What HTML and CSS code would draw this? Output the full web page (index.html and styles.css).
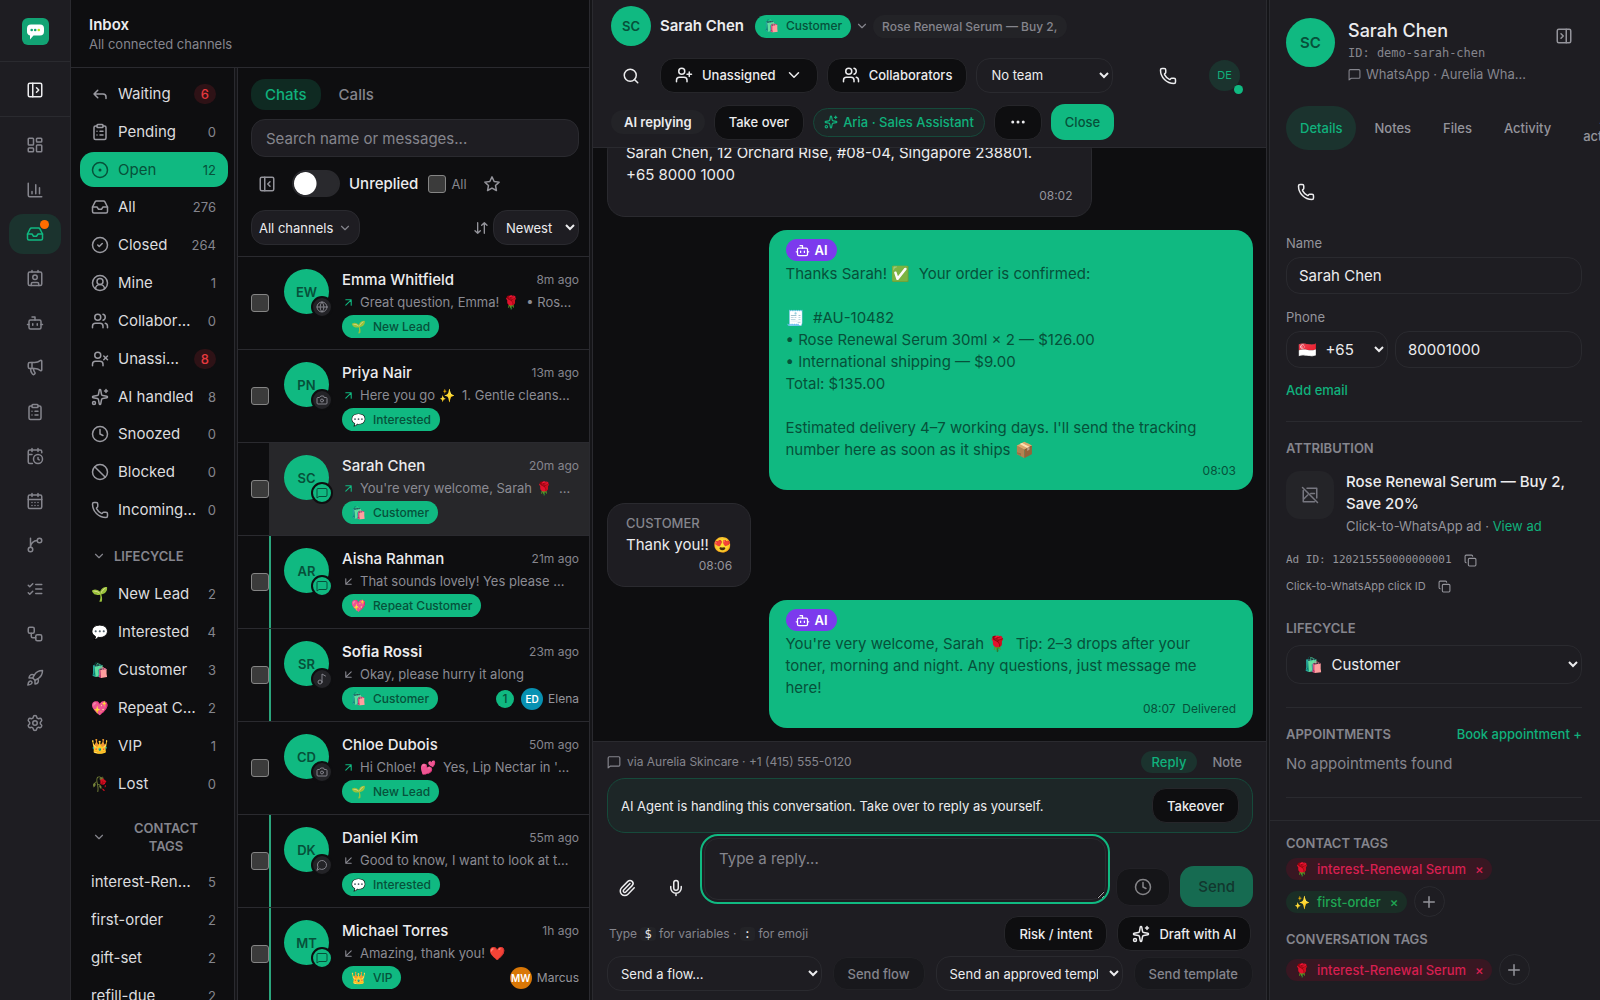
FILE: index.html
```html
<!DOCTYPE html>
<html lang="en">
<head>
<meta charset="utf-8">
<title>Inbox</title>
<link rel="stylesheet" href="styles.css">
</head>
<body>

<!-- icon sprite -->
<svg class="sprite" aria-hidden="true">
  <symbol id="panel-open" viewBox="0 0 24 24"><rect width="18" height="18" x="3" y="3" rx="2"/><path d="M9 3v18M14 9l3 3-3 3"/></symbol>
  <symbol id="panel-close" viewBox="0 0 24 24"><rect width="18" height="18" x="3" y="3" rx="2"/><path d="M9 3v18M16 15l-3-3 3-3"/></symbol>
  <symbol id="panel-right" viewBox="0 0 24 24"><rect width="18" height="18" x="3" y="3" rx="2"/><path d="M15 3v18M8 9l3 3-3 3"/></symbol>
  <symbol id="dashboard" viewBox="0 0 24 24"><rect width="7" height="9" x="3" y="3" rx="1"/><rect width="7" height="5" x="14" y="3" rx="1"/><rect width="7" height="9" x="14" y="12" rx="1"/><rect width="7" height="5" x="3" y="16" rx="1"/></symbol>
  <symbol id="chart" viewBox="0 0 24 24"><path d="M3 3v16a2 2 0 0 0 2 2h16M18 17V9M13 17V5M8 17v-3"/></symbol>
  <symbol id="inbox" viewBox="0 0 24 24"><path d="M22 12h-6l-2 3h-4l-2-3H2"/><path d="M5.45 5.11 2 12v6a2 2 0 0 0 2 2h16a2 2 0 0 0 2-2v-6l-3.45-6.89A2 2 0 0 0 16.76 4H7.24a2 2 0 0 0-1.79 1.11z"/></symbol>
  <symbol id="contact" viewBox="0 0 24 24"><path d="M16 2v2M7 22v-2a2 2 0 0 1 2-2h6a2 2 0 0 1 2 2v2M8 2v2"/><circle cx="12" cy="11" r="3"/><rect x="3" y="4" width="18" height="18" rx="2"/></symbol>
  <symbol id="bot" viewBox="0 0 24 24"><path d="M12 8V4H8"/><rect width="16" height="12" x="4" y="8" rx="2"/><path d="M2 14h2M20 14h2M15 13v2M9 13v2"/></symbol>
  <symbol id="megaphone" viewBox="0 0 24 24"><path d="M11 6a13 13 0 0 0 8.4-2.8A1 1 0 0 1 21 4v12a1 1 0 0 1-1.6.8A13 13 0 0 0 11 14H5a2 2 0 0 1-2-2V8a2 2 0 0 1 2-2z"/><path d="M6 14a12 12 0 0 0 2.4 7.2 2 2 0 0 0 3.2-2.4A8 8 0 0 1 10 14M8 6v8"/></symbol>
  <symbol id="clipboard" viewBox="0 0 24 24"><rect width="8" height="4" x="8" y="2" rx="1"/><path d="M16 4h2a2 2 0 0 1 2 2v14a2 2 0 0 1-2 2H6a2 2 0 0 1-2-2V6a2 2 0 0 1 2-2h2M12 11h4M12 16h4M8 11h.01M8 16h.01"/></symbol>
  <symbol id="cal-clock" viewBox="0 0 24 24"><path d="M16 14v2.2l1.6 1M16 2v4M21 7.5V6a2 2 0 0 0-2-2H5a2 2 0 0 0-2 2v14a2 2 0 0 0 2 2h3.5M3 10h5M8 2v4"/><circle cx="16" cy="16" r="6"/></symbol>
  <symbol id="cal-days" viewBox="0 0 24 24"><path d="M8 2v4M16 2v4"/><rect width="18" height="18" x="3" y="4" rx="2"/><path d="M3 10h18M8 14h.01M12 14h.01M16 14h.01M8 18h.01M12 18h.01M16 18h.01"/></symbol>
  <symbol id="branch" viewBox="0 0 24 24"><path d="M15 6a9 9 0 0 0-9 9V3"/><circle cx="18" cy="6" r="3"/><circle cx="6" cy="18" r="3"/></symbol>
  <symbol id="checks" viewBox="0 0 24 24"><path d="m3 17 2 2 4-4M3 7l2 2 4-4M13 6h8M13 12h8M13 18h8"/></symbol>
  <symbol id="workflow" viewBox="0 0 24 24"><rect width="8" height="8" x="3" y="3" rx="2"/><path d="M7 11v4a2 2 0 0 0 2 2h4"/><rect width="8" height="8" x="13" y="13" rx="2"/></symbol>
  <symbol id="rocket" viewBox="0 0 24 24"><path d="M4.5 16.5c-1.5 1.26-2 5-2 5s3.74-.5 5-2c.71-.84.7-2.13-.09-2.91a2.18 2.18 0 0 0-2.91-.09z"/><path d="m12 15-3-3a22 22 0 0 1 2-3.95A12.88 12.88 0 0 1 22 2c0 2.72-.78 7.5-6 11a22.35 22.35 0 0 1-4 2z"/><path d="M9 12H4s.55-3.03 2-4c1.62-1.08 5 0 5 0M12 15v5s3.03-.55 4-2c1.08-1.62 0-5 0-5"/></symbol>
  <symbol id="settings" viewBox="0 0 24 24"><path d="M9.671 4.136a2.34 2.34 0 0 1 4.659 0 2.34 2.34 0 0 0 3.319 1.915 2.34 2.34 0 0 1 2.33 4.033 2.34 2.34 0 0 0 0 3.831 2.34 2.34 0 0 1-2.33 4.033 2.34 2.34 0 0 0-3.319 1.915 2.34 2.34 0 0 1-4.659 0 2.34 2.34 0 0 0-3.32-1.915 2.34 2.34 0 0 1-2.33-4.033 2.34 2.34 0 0 0 0-3.831A2.34 2.34 0 0 1 6.35 6.051a2.34 2.34 0 0 0 3.319-1.915"/><circle cx="12" cy="12" r="3"/></symbol>
  <symbol id="reply" viewBox="0 0 24 24"><path d="M20 18v-2a4 4 0 0 0-4-4H4M9 17l-5-5 5-5"/></symbol>
  <symbol id="dot-circle" viewBox="0 0 24 24"><circle cx="12" cy="12" r="10"/><circle cx="12" cy="12" r="1"/></symbol>
  <symbol id="check-circle" viewBox="0 0 24 24"><circle cx="12" cy="12" r="10"/><path d="m9 12 2 2 4-4"/></symbol>
  <symbol id="user-circle" viewBox="0 0 24 24"><path d="M18 20a6 6 0 0 0-12 0"/><circle cx="12" cy="10" r="4"/><circle cx="12" cy="12" r="10"/></symbol>
  <symbol id="users" viewBox="0 0 24 24"><path d="M16 21v-2a4 4 0 0 0-4-4H6a4 4 0 0 0-4 4v2M16 3.128a4 4 0 0 1 0 7.744M22 21v-2a4 4 0 0 0-3-3.87"/><circle cx="9" cy="7" r="4"/></symbol>
  <symbol id="user-x" viewBox="0 0 24 24"><path d="M16 21v-2a4 4 0 0 0-4-4H6a4 4 0 0 0-4 4v2M17 8l5 5M22 8l-5 5"/><circle cx="9" cy="7" r="4"/></symbol>
  <symbol id="user-plus" viewBox="0 0 24 24"><path d="M16 21v-2a4 4 0 0 0-4-4H6a4 4 0 0 0-4 4v2M19 8v6M22 11h-6"/><circle cx="9" cy="7" r="4"/></symbol>
  <symbol id="sparkles" viewBox="0 0 24 24"><path d="M11.017 2.814a1 1 0 0 1 1.966 0l1.051 5.558a2 2 0 0 0 1.594 1.594l5.558 1.051a1 1 0 0 1 0 1.966l-5.558 1.051a2 2 0 0 0-1.594 1.594l-1.051 5.558a1 1 0 0 1-1.966 0l-1.051-5.558a2 2 0 0 0-1.594-1.594l-5.558-1.051a1 1 0 0 1 0-1.966l5.558-1.051a2 2 0 0 0 1.594-1.594z"/><path d="M20 2v4M22 4h-4"/><circle cx="4" cy="20" r="2"/></symbol>
  <symbol id="clock" viewBox="0 0 24 24"><circle cx="12" cy="12" r="10"/><path d="M12 6v6l4 2"/></symbol>
  <symbol id="ban" viewBox="0 0 24 24"><circle cx="12" cy="12" r="10"/><path d="m4.9 4.9 14.2 14.2"/></symbol>
  <symbol id="phone" viewBox="0 0 24 24"><path d="M13.832 16.568a1 1 0 0 0 1.213-.303l.355-.465A2 2 0 0 1 17 15h3a2 2 0 0 1 2 2v3a2 2 0 0 1-2 2A18 18 0 0 1 2 4a2 2 0 0 1 2-2h3a2 2 0 0 1 2 2v3a2 2 0 0 1-.8 1.6l-.468.351a1 1 0 0 0-.292 1.233 14 14 0 0 0 6.392 6.384"/></symbol>
  <symbol id="chevron" viewBox="0 0 24 24"><path d="m6 9 6 6 6-6"/></symbol>
  <symbol id="star" viewBox="0 0 24 24"><path d="M12 2.5l2.9 6.1 6.6.9-4.8 4.6 1.2 6.6L12 17.500l-5.900 3.200 1.200-6.600-4.800-4.600 6.600-.9z"/></symbol>
  <symbol id="sort" viewBox="0 0 24 24"><path d="m3 16 4 4 4-4M7 20V4M21 8l-4-4-4 4M17 4v16"/></symbol>
  <symbol id="globe" viewBox="0 0 24 24"><circle cx="12" cy="12" r="10"/><path d="M12 2a14.500 14.500 0 0 0 0 20 14.500 14.500 0 0 0 0-20M2 12h20"/></symbol>
  <symbol id="camera" viewBox="0 0 24 24"><path d="M14.500 4h-5L7 7H4a2 2 0 0 0-2 2v9a2 2 0 0 0 2 2h16a2 2 0 0 0 2-2V9a2 2 0 0 0-2-2h-3z"/><circle cx="12" cy="13" r="3"/></symbol>
  <symbol id="message" viewBox="0 0 24 24"><path d="M22 17a2 2 0 0 1-2 2H6l-4 3V5a2 2 0 0 1 2-2h16a2 2 0 0 1 2 2z"/></symbol>
  <symbol id="bubble" viewBox="0 0 24 24"><path d="M7.900 20A9 9 0 1 0 4 16.100L2 22z"/></symbol>
  <symbol id="note" viewBox="0 0 24 24"><circle cx="8" cy="18" r="4"/><path d="M12 18V2l7 4"/></symbol>
  <symbol id="arrow-out" viewBox="0 0 24 24"><path d="M7 7h10v10M7 17 17 7"/></symbol>
  <symbol id="arrow-in" viewBox="0 0 24 24"><path d="M17 7 7 17M17 17H7V7"/></symbol>
  <symbol id="search" viewBox="0 0 24 24"><circle cx="11" cy="11" r="8"/><path d="m21 21-4.340-4.340"/></symbol>
  <symbol id="dots" viewBox="0 0 24 24"><circle cx="12" cy="12" r="1"/><circle cx="19" cy="12" r="1"/><circle cx="5" cy="12" r="1"/></symbol>
  <symbol id="clip" viewBox="0 0 24 24"><path d="m16 6-8.414 8.586a2 2 0 0 0 2.829 2.829l8.414-8.586a4 4 0 1 0-5.657-5.657l-8.379 8.551a6 6 0 1 0 8.485 8.485l8.379-8.551"/></symbol>
  <symbol id="mic" viewBox="0 0 24 24"><path d="M12 19v3M19 10v2a7 7 0 0 1-14 0v-2"/><rect x="9" y="2" width="6" height="13" rx="3"/></symbol>
  <symbol id="copy" viewBox="0 0 24 24"><rect width="14" height="14" x="8" y="8" rx="2"/><path d="M4 16c-1.100 0-2-.9-2-2V4c0-1.100.9-2 2-2h10c1.100 0 2 .9 2 2"/></symbol>
  <symbol id="image-off" viewBox="0 0 24 24"><path d="M2 2l20 20M8 3h13v13M3 6v15h15M3 18l6-6M13 10l5 0"/></symbol>
  <symbol id="plus" viewBox="0 0 24 24"><path d="M5 12h14M12 5v14"/></symbol>
</svg>

<div class="app">

  <nav class="rail" aria-label="Main">
    <a class="rail-logo" href="#" aria-label="Home">
      <svg viewBox="0 0 27 27">
        <rect width="27" height="27" rx="6" fill="#12a374"/>
        <path d="M9 6.500h9a4 4 0 0 1 4 4v3a4 4 0 0 1-4 4h-6.500L8 21.500v-4a4 4 0 0 1-3-4v-3a4 4 0 0 1 4-4z" fill="#fff"/>
        <circle cx="9.700" cy="12" r="1.300" fill="#12a374"/><circle cx="13.200" cy="12" r="1.300" fill="#12a374"/><circle cx="16.800" cy="12" r="1.300" fill="#b5e61d"/>
      </svg>
    </a>
    <button class="rail-toggle" aria-label="Expand menu"><svg class="icon"><use href="#panel-open"/></svg></button>
    <div class="rail-items">
      <a href="#" aria-label="Dashboard"><svg class="icon"><use href="#dashboard"/></svg></a>
      <a href="#" aria-label="Reports"><svg class="icon"><use href="#chart"/></svg></a>
      <a href="#" aria-label="Inbox" class="active"><svg class="icon"><use href="#inbox"/></svg><span class="rail-dot"></span></a>
      <a href="#" aria-label="Contacts"><svg class="icon"><use href="#contact"/></svg></a>
      <a href="#" aria-label="AI agents"><svg class="icon"><use href="#bot"/></svg></a>
      <a href="#" aria-label="Broadcasts"><svg class="icon"><use href="#megaphone"/></svg></a>
      <a href="#" aria-label="Forms"><svg class="icon"><use href="#clipboard"/></svg></a>
      <a href="#" aria-label="Scheduled"><svg class="icon"><use href="#cal-clock"/></svg></a>
      <a href="#" aria-label="Calendar"><svg class="icon"><use href="#cal-days"/></svg></a>
      <a href="#" aria-label="Flows"><svg class="icon"><use href="#branch"/></svg></a>
      <a href="#" aria-label="Tasks"><svg class="icon"><use href="#checks"/></svg></a>
      <a href="#" aria-label="Workflows"><svg class="icon"><use href="#workflow"/></svg></a>
      <a href="#" aria-label="Launch"><svg class="icon"><use href="#rocket"/></svg></a>
      <a href="#" aria-label="Settings"><svg class="icon"><use href="#settings"/></svg></a>
    </div>
  </nav>

  <section class="inbox">
    <header class="inbox-head">
      <h1>Inbox</h1>
      <p>All connected channels</p>
    </header>

    <aside class="filters">
      <div class="filter-group filter-status">
        <button><svg class="icon"><use href="#reply"/></svg><span>Waiting</span><b class="alert">6</b></button>
        <button><svg class="icon"><use href="#clipboard"/></svg><span>Pending</span><b>0</b></button>
        <button class="active"><svg class="icon"><use href="#dot-circle"/></svg><span>Open</span><b>12</b></button>
        <button><svg class="icon"><use href="#inbox"/></svg><span>All</span><b>276</b></button>
        <button><svg class="icon"><use href="#check-circle"/></svg><span>Closed</span><b>264</b></button>
        <button><svg class="icon"><use href="#user-circle"/></svg><span>Mine</span><b>1</b></button>
        <button><svg class="icon"><use href="#users"/></svg><span>Collaborating</span><b>0</b></button>
        <button><svg class="icon"><use href="#user-x"/></svg><span>Unassigned</span><b class="alert">8</b></button>
        <button><svg class="icon"><use href="#sparkles"/></svg><span>AI handled</span><b>8</b></button>
        <button><svg class="icon"><use href="#clock"/></svg><span>Snoozed</span><b>0</b></button>
        <button><svg class="icon"><use href="#ban"/></svg><span>Blocked</span><b>0</b></button>
        <button><svg class="icon"><use href="#phone"/></svg><span>Incoming calls</span><b>0</b></button>
      </div>
      <button class="filter-title"><svg class="icon"><use href="#chevron"/></svg><span>LIFECYCLE</span></button>
      <div class="filter-group">
        <button><i>🌱</i><span>New Lead</span><b>2</b></button>
        <button><i>💬</i><span>Interested</span><b>4</b></button>
        <button><i>🛍️</i><span>Customer</span><b>3</b></button>
        <button><i>💖</i><span>Repeat Customer</span><b>2</b></button>
        <button><i>👑</i><span>VIP</span><b>1</b></button>
        <button><i>🥀</i><span>Lost</span><b>0</b></button>
      </div>
      <button class="filter-title two-line"><svg class="icon"><use href="#chevron"/></svg><span>CONTACT TAGS</span></button>
      <div class="filter-group filter-tags">
        <button><span>interest-Renewal Serum</span><b>5</b></button>
        <button><span>first-order</span><b>2</b></button>
        <button><span>gift-set</span><b>2</b></button>
        <button><span>refill-due</span><b>2</b></button>
      </div>
    </aside>
    <div class="divider"></div>

    <div class="chats">
      <div class="chats-head">
        <div class="chat-tabs">
          <button class="active">Chats</button>
          <button>Calls</button>
        </div>
        <input class="chat-search" type="search" placeholder="Search name or messages..." aria-label="Search name or messages">
        <div class="chat-options">
          <button class="icon-btn" aria-label="Collapse filters"><svg class="icon"><use href="#panel-close"/></svg></button>
          <label class="switch"><input type="checkbox" role="switch">Unreplied</label>
          <label class="check-all"><input class="check" type="checkbox">All</label>
          <button class="icon-btn" aria-label="Starred"><svg class="icon"><use href="#star"/></svg></button>
        </div>
        <div class="chat-sort">
          <button class="channels">All channels <svg class="icon"><use href="#chevron"/></svg></button>
          <svg class="icon"><use href="#sort"/></svg>
          <select aria-label="Sort"><option>Newest</option></select>
        </div>
      </div>

      <ul class="chat-list">
        <li>
          <input class="check" type="checkbox" aria-label="Select Emma Whitfield">
          <a href="#">
            <span class="avatar">EW<span class="channel"><svg class="icon"><use href="#globe"/></svg></span></span>
            <span class="chat-body">
              <span class="chat-top"><strong>Emma Whitfield</strong><time>8m ago</time></span>
              <span class="preview out"><svg class="icon"><use href="#arrow-out"/></svg><span>Great question, Emma! 🌹 &nbsp;• Rose Renewal Serum</span></span>
              <span class="chat-foot"><span class="pill"><i>🌱</i>New Lead</span></span>
            </span>
          </a>
        </li>
        <li>
          <input class="check" type="checkbox" aria-label="Select Priya Nair">
          <a href="#">
            <span class="avatar">PN<span class="channel"><svg class="icon"><use href="#camera"/></svg></span></span>
            <span class="chat-body">
              <span class="chat-top"><strong>Priya Nair</strong><time>13m ago</time></span>
              <span class="preview out"><svg class="icon"><use href="#arrow-out"/></svg><span>Here you go ✨ &nbsp;1. Gentle cleanser, morning</span></span>
              <span class="chat-foot"><span class="pill"><i>💬</i>Interested</span></span>
            </span>
          </a>
        </li>
        <li class="selected">
          <input class="check" type="checkbox" aria-label="Select Sarah Chen">
          <a href="#">
            <span class="avatar">SC<span class="channel wa"><svg class="icon"><use href="#message"/></svg></span></span>
            <span class="chat-body">
              <span class="chat-top"><strong>Sarah Chen</strong><time>20m ago</time></span>
              <span class="preview out"><svg class="icon"><use href="#arrow-out"/></svg><span>You're very welcome, Sarah 🌹 &nbsp;Tip: 2–3 drops</span></span>
              <span class="chat-foot"><span class="pill"><i>🛍️</i>Customer</span></span>
            </span>
          </a>
        </li>
        <li class="unread">
          <input class="check" type="checkbox" aria-label="Select Aisha Rahman">
          <a href="#">
            <span class="avatar">AR<span class="channel wa"><svg class="icon"><use href="#message"/></svg></span></span>
            <span class="chat-body">
              <span class="chat-top"><strong>Aisha Rahman</strong><time>21m ago</time></span>
              <span class="preview"><svg class="icon"><use href="#arrow-in"/></svg><span>That sounds lovely! Yes please make it two</span></span>
              <span class="chat-foot"><span class="pill"><i>💖</i>Repeat Customer</span></span>
            </span>
          </a>
        </li>
        <li class="unread new">
          <input class="check" type="checkbox" aria-label="Select Sofia Rossi">
          <a href="#">
            <span class="avatar">SR<span class="channel"><svg class="icon"><use href="#note"/></svg></span></span>
            <span class="chat-body">
              <span class="chat-top"><strong>Sofia Rossi</strong><time>23m ago</time></span>
              <span class="preview"><svg class="icon"><use href="#arrow-in"/></svg><span>Okay, please hurry it along</span></span>
              <span class="chat-foot"><span class="pill"><i>🛍️</i>Customer</span><span class="count">1</span><span class="agent blue">ED</span><span class="agent-name">Elena</span></span>
            </span>
          </a>
        </li>
        <li>
          <input class="check" type="checkbox" aria-label="Select Chloe Dubois">
          <a href="#">
            <span class="avatar">CD<span class="channel"><svg class="icon"><use href="#camera"/></svg></span></span>
            <span class="chat-body">
              <span class="chat-top"><strong>Chloe Dubois</strong><time>50m ago</time></span>
              <span class="preview out"><svg class="icon"><use href="#arrow-out"/></svg><span>Hi Chloe! 💕 &nbsp;Yes, Lip Nectar in 'Rosewood'</span></span>
              <span class="chat-foot"><span class="pill"><i>🌱</i>New Lead</span></span>
            </span>
          </a>
        </li>
        <li class="unread">
          <input class="check" type="checkbox" aria-label="Select Daniel Kim">
          <a href="#">
            <span class="avatar">DK<span class="channel"><svg class="icon"><use href="#bubble"/></svg></span></span>
            <span class="chat-body">
              <span class="chat-top"><strong>Daniel Kim</strong><time>55m ago</time></span>
              <span class="preview"><svg class="icon"><use href="#arrow-in"/></svg><span>Good to know, I want to look at the gift sets</span></span>
              <span class="chat-foot"><span class="pill"><i>💬</i>Interested</span></span>
            </span>
          </a>
        </li>
        <li class="unread">
          <input class="check" type="checkbox" aria-label="Select Michael Torres">
          <a href="#">
            <span class="avatar">MT<span class="channel wa"><svg class="icon"><use href="#message"/></svg></span></span>
            <span class="chat-body">
              <span class="chat-top"><strong>Michael Torres</strong><time>1h ago</time></span>
              <span class="preview"><svg class="icon"><use href="#arrow-in"/></svg><span>Amazing, thank you! ❤️</span></span>
              <span class="chat-foot"><span class="pill"><i>👑</i>VIP</span><span class="agent orange">MW</span><span class="agent-name">Marcus</span></span>
            </span>
          </a>
        </li>
      </ul>
    </div>
  </section>

  <div class="divider"></div>

  <main class="thread">
    <header class="thread-head">
      <div class="head-row">
        <span class="avatar avatar-head">SC</span>
        <h2>Sarah Chen</h2>
        <span class="pill"><i>🛍️</i>Customer</span>
        <svg class="icon small"><use href="#chevron"/></svg>
        <span class="ad-chip"><span>Rose Renewal Serum — Buy 2, Save 20%</span></span>
      </div>
      <div class="head-row head-controls">
        <button class="search-btn" aria-label="Search"><svg class="icon"><use href="#search"/></svg></button>
        <button class="btn"><svg class="icon"><use href="#user-plus"/></svg>Unassigned<svg class="icon"><use href="#chevron"/></svg></button>
        <button class="btn"><svg class="icon"><use href="#users"/></svg>Collaborators</button>
        <select class="team" aria-label="Team"><option>No team</option></select>
        <button class="call-btn" aria-label="Call"><svg class="icon"><use href="#phone"/></svg></button>
        <span class="me">DE</span>
      </div>
      <div class="head-row head-actions">
        <span class="state">AI replying</span>
        <button class="btn take-over">Take over</button>
        <span class="agent-chip"><svg class="icon"><use href="#sparkles"/></svg>Aria · Sales Assistant</span>
        <button class="btn more" aria-label="More"><svg class="icon"><use href="#dots"/></svg></button>
        <button class="btn-primary">Close</button>
      </div>
    </header>

    <div class="messages">
      <div class="msg msg-full">
        <p>Sarah Chen, 12 Orchard Rise, #08-04, Singapore 238801.
+65 8000 1000</p>
        <time>08:02</time>
      </div>
      <div class="msg msg-full sent">
        <span class="ai-badge"><svg class="icon"><use href="#bot"/></svg>AI</span>
        <p>Thanks Sarah! ✅ &nbsp;Your order is confirmed:

🧾 &nbsp;#AU-10482
• Rose Renewal Serum 30ml × 2 — $126.00
• International shipping — $9.00
Total: $135.00

Estimated delivery 4–7 working days. I'll send the tracking number here as soon as it ships 📦</p>
        <time>08:03</time>
      </div>
      <div class="msg">
        <span class="from">CUSTOMER</span>
        <p>Thank you!! 😍</p>
        <time>08:06</time>
      </div>
      <div class="msg msg-full sent">
        <span class="ai-badge"><svg class="icon"><use href="#bot"/></svg>AI</span>
        <p>You're very welcome, Sarah 🌹 &nbsp;Tip: 2–3 drops after your
toner, morning and night. Any questions, just message me
here!</p>
        <time>08:07 &nbsp;Delivered</time>
      </div>
    </div>

    <footer class="composer">
      <div class="via">
        <svg class="icon"><use href="#message"/></svg>
        <span>via Aurelia Skincare · +1 (415) 555-0120</span>
        <button class="active">Reply</button>
        <button>Note</button>
      </div>
      <div class="banner">
        <span>AI Agent is handling this conversation. Take over to reply as yourself.</span>
        <button class="btn">Takeover</button>
      </div>
      <form class="reply-row">
        <button type="button" class="tool" aria-label="Attach file"><svg class="icon"><use href="#clip"/></svg></button>
        <button type="button" class="tool" aria-label="Record voice note"><svg class="icon"><use href="#mic"/></svg></button>
        <textarea placeholder="Type a reply..." aria-label="Reply"></textarea>
        <button type="button" class="btn later" aria-label="Send later"><svg class="icon"><use href="#clock"/></svg></button>
        <button type="button" class="btn-primary send">Send</button>
      </form>
      <div class="hints">
        <span>Type <kbd>$</kbd> for variables · <kbd>:</kbd> for emoji</span>
        <button class="btn">Risk / intent</button>
        <button class="btn"><svg class="icon"><use href="#sparkles"/></svg>Draft with AI</button>
      </div>
      <div class="sends">
        <select class="flow" aria-label="Flow"><option>Send a flow...</option></select>
        <button class="btn muted" disabled>Send flow</button>
        <select class="template" aria-label="Template"><option>Send an approved template...</option></select>
        <button class="btn muted" disabled>Send template</button>
      </div>
    </footer>
  </main>

  <div class="divider"></div>

  <aside class="details">
    <header class="person">
      <span class="avatar avatar-big">SC</span>
      <div class="person-text">
        <h2>Sarah Chen</h2>
        <code>ID: demo-sarah-chen</code>
        <span class="source"><svg class="icon"><use href="#message"/></svg><span>WhatsApp · Aurelia WhatsApp Business</span></span>
      </div>
      <button class="icon-btn" aria-label="Close details"><svg class="icon"><use href="#panel-right"/></svg></button>
    </header>
    <div class="tabs">
      <button class="active">Details</button>
      <button>Notes</button>
      <button>Files</button>
      <button>Activity</button>
      <button>AI<br>activity</button>
    </div>

    <div class="details-body">
      <button class="call-btn" aria-label="Call contact"><svg class="icon"><use href="#phone"/></svg></button>
      <div class="field">
        <label for="name">Name</label>
        <input id="name" type="text" value="Sarah Chen">
      </div>
      <div class="field">
        <label for="phone-no">Phone</label>
        <div class="phone-row">
          <select aria-label="Country code"><option>🇸🇬 &nbsp;+65</option></select>
          <input id="phone-no" type="tel" value="80001000">
        </div>
      </div>
      <a class="add-email" href="#">Add email</a>

      <section class="attribution">
        <h3>ATTRIBUTION</h3>
        <div class="ad">
          <span class="thumb"><svg class="icon"><use href="#image-off"/></svg></span>
          <div>
            <strong>Rose Renewal Serum — Buy 2, Save 20%</strong>
            <p>Click-to-WhatsApp ad · <a href="#">View ad</a></p>
          </div>
        </div>
        <div class="id-row"><code>Ad ID: 120215550000000001</code><button class="icon-btn" aria-label="Copy ad ID"><svg class="icon"><use href="#copy"/></svg></button></div>
        <div class="id-row"><span>Click-to-WhatsApp click ID</span><button class="icon-btn" aria-label="Copy click ID"><svg class="icon"><use href="#copy"/></svg></button></div>
      </section>

      <section class="lifecycle">
        <h3><label for="stage">LIFECYCLE</label></h3>
        <select id="stage"><option>🛍️ &nbsp;Customer</option></select>
      </section>

      <section class="appointments">
        <div class="appt-head"><h3>APPOINTMENTS</h3><a href="#">Book appointment +</a></div>
        <p>No appointments found</p>
      </section>
    </div>

    <footer class="tags">
      <h3>CONTACT TAGS</h3>
      <div class="tag-row">
        <span class="tag rose"><i>🌹</i>interest-Renewal Serum<button aria-label="Remove tag">×</button></span>
        <span class="tag green"><i>✨</i>first-order<button aria-label="Remove tag">×</button></span>
        <button class="add-tag" aria-label="Add contact tag"><svg class="icon"><use href="#plus"/></svg></button>
      </div>
      <h3>CONVERSATION TAGS</h3>
      <div class="tag-row">
        <span class="tag rose"><i>🌹</i>interest-Renewal Serum<button aria-label="Remove tag">×</button></span>
        <button class="add-tag" aria-label="Add conversation tag"><svg class="icon"><use href="#plus"/></svg></button>
      </div>
    </footer>
  </aside>

</div>

</body>
</html>
```

FILE: styles.css
```css
:root {
  --bg: #0e0e10;
  --panel: #1e1d22;
  --line: #2a2a2f;
  --text: #ececee;
  --muted: #85858d;
  --green: #10b981;
  --green-text: #10b17c;
  --on-green: #06513a;
  color-scheme: dark;
}

* {
  box-sizing: border-box;
}

body {
  margin: 0;
  background: var(--bg);
  color: var(--text);
  font-family: Inter, "Noto Sans", sans-serif;
  font-size: 15px;
  line-height: 22px;
}

button, input, select, textarea {
  font: inherit;
  color: inherit;
}

button {
  background: none;
  border: 0;
  padding: 0;
  cursor: pointer;
}

h1, h2, h3, p, ul {
  margin: 0;
  padding: 0;
}

a {
  color: var(--green-text);
  text-decoration: none;
}

i {
  font-style: normal;
}

code, kbd {
  font-family: "DejaVu Sans Mono", monospace;
}

.sprite {
  display: none;
}

.icon {
  width: 18px;
  height: 18px;
  flex: none;
  fill: none;
  stroke: currentColor;
  stroke-width: 2;
  stroke-linecap: round;
  stroke-linejoin: round;
}

.app {
  display: grid;
  grid-template-columns: 71px 518px 4px minmax(0, 1fr) 4px 330px;
  grid-template-rows: minmax(0, 1fr);
  height: 100vh;
  overflow: hidden;
}

.divider {
  border: solid var(--line);
  border-width: 0 1px;
  background: #151518;
}

.avatar {
  position: relative;
  display: flex;
  align-items: center;
  justify-content: center;
  flex: none;
  width: 45px;
  height: 45px;
  border-radius: 50%;
  background: var(--green);
  color: var(--on-green);
  font-size: 13px;
  font-weight: 600;
}

.pill {
  display: inline-flex;
  align-items: center;
  gap: 7px;
  height: 23px;
  padding: 0 9px;
  border-radius: 12px;
  background: var(--green);
  color: var(--on-green);
  font-size: 12px;
  font-weight: 500;
}

.btn {
  display: inline-flex;
  align-items: center;
  justify-content: center;
  gap: 9px;
  height: 35px;
  padding: 0 14px;
  border: 1px solid #26262a;
  border-radius: 14px;
  background: var(--bg);
  font-size: 13px;
  font-weight: 500;
}

.btn-primary {
  height: 36px;
  padding: 0 14px;
  border-radius: 14px;
  background: var(--green);
  color: var(--on-green);
  font-size: 13px;
  font-weight: 500;
}

select {
  border: 1px solid var(--line);
  border-radius: 14px;
  background-color: var(--panel);
}

/* icon rail */
.rail {
  display: flex;
  flex-direction: column;
  background: var(--panel);
  border-right: 1px solid var(--line);
}

.rail-logo {
  height: 62px;
  padding: 18px 0 0 22px;
  border-bottom: 1px solid var(--line);
}

.rail-logo svg {
  display: block;
  width: 27px;
  height: 27px;
}

.rail-toggle {
  height: 55px;
  border-bottom: 1px solid var(--line);
}

.rail-toggle .icon {
  vertical-align: middle;
}

.rail-items {
  display: grid;
  grid-auto-rows: 1fr;
  gap: 4px;
  height: 618px;
  margin-top: 8px;
  padding: 0 9px;
}

.rail-items a {
  position: relative;
  display: flex;
  align-items: center;
  justify-content: center;
  border-radius: 14px;
  color: var(--muted);
}

.rail-items .active {
  background: #1b332e;
  color: var(--green);
}

.rail-dot {
  position: absolute;
  top: 6px;
  right: 12px;
  width: 9px;
  height: 9px;
  border-radius: 50%;
  background: #ff6d00;
}

/* inbox */
.inbox {
  display: grid;
  grid-template-columns: 163px 4px minmax(0, 1fr);
  grid-template-rows: 68px minmax(0, 1fr);
}

.inbox-head {
  grid-column: 1 / -1;
  padding: 14px 18px;
  border-bottom: 1px solid var(--line);
}

.inbox-head h1 {
  font-size: 15px;
  font-weight: 600;
  line-height: 21px;
}

.inbox-head p {
  color: var(--muted);
  font-size: 13px;
  line-height: 18px;
}

.filters {
  overflow: hidden;
  padding: 8px 6px 0 9px;
}

.filter-group {
  display: grid;
  grid-template-columns: minmax(0, 1fr);
  grid-auto-rows: 36px;
  gap: 2px;
}

.filter-status {
  grid-auto-rows: 1fr;
  height: 452px;
}

.filter-group button {
  display: flex;
  align-items: center;
  gap: 9px;
  padding: 0 12px 0 11px;
  border-radius: 14px;
  color: #dcdcdf;
  text-align: left;
}

.filter-group .icon {
  color: #9a9aa1;
}

.filter-group i {
  width: 18px;
  font-size: 14px;
}

.filter-group span {
  flex: 1;
  overflow: hidden;
  text-overflow: ellipsis;
  white-space: nowrap;
}

.filter-group b {
  color: var(--muted);
  font-size: 13px;
  font-weight: 400;
}

.filter-tags button {
  gap: 14px;
}

.filter-group .alert {
  padding: 0 7px;
  border-radius: 10px;
  background: #2e1216;
  color: #e5393f;
  font-weight: 500;
  line-height: 20px;
}

.filter-group .active {
  background: var(--green);
}

.filter-group .active * {
  color: var(--on-green);
}

.filter-title {
  display: flex;
  align-items: center;
  gap: 8px;
  width: 100%;
  height: 19px;
  margin: 18px 0 11px;
  padding: 0 12px;
  color: var(--muted);
  font-size: 13px;
  font-weight: 600;
  line-height: 18px;
}

.filter-title .icon {
  width: 14px;
  height: 14px;
}

.two-line {
  height: 36px;
  margin: 17px 0 9px;
}

.two-line span {
  flex: 1;
  padding: 0 20px;
}

/* chat list */
.chats {
  display: flex;
  flex-direction: column;
  overflow: hidden;
}

.chats-head {
  padding: 11px 10px 11px 13px;
  border-bottom: 1px solid var(--line);
}

.chat-tabs {
  display: flex;
  gap: 4px;
}

.chat-tabs button {
  height: 31px;
  padding: 0 14px;
  border-radius: 14px;
  color: var(--muted);
  font-weight: 500;
}

.chat-tabs .active {
  background: #0f2a22;
  color: var(--green-text);
}

.chat-search {
  display: block;
  width: 100%;
  height: 38px;
  margin-top: 9px;
  padding: 0 14px;
  border: 1px solid var(--line);
  border-radius: 14px;
  background: var(--panel);
}

input::placeholder, textarea::placeholder {
  color: var(--muted);
  opacity: 1;
}

.chat-options {
  display: flex;
  align-items: center;
  height: 27px;
  margin-top: 13px;
}

.icon-btn {
  display: flex;
  align-items: center;
  color: #94949b;
}

.chat-options .icon-btn {
  width: 32px;
  height: 27px;
  justify-content: center;
}

.switch, .check-all {
  display: flex;
  align-items: center;
}

.switch {
  gap: 9px;
  margin: 0 10px 0 9px;
  font-weight: 500;
}

.switch input {
  appearance: none;
  width: 48px;
  height: 27px;
  margin: 0;
  border: 2px solid #29292d;
  border-radius: 14px;
  background: radial-gradient(circle at 11px 50%, #fff 11px, #29292d 12px);
}

.check-all {
  gap: 5px;
  color: var(--muted);
  font-size: 13px;
}

.check {
  appearance: none;
  flex: none;
  width: 18px;
  height: 18px;
  margin: 0;
  border: 1px solid #858585;
  border-radius: 3px;
  background: #3b3b3b;
}

.check-all + .icon-btn {
  margin-left: 9px;
}

.chat-sort {
  display: flex;
  align-items: center;
  height: 35px;
  margin-top: 13px;
  color: #94949b;
}

.channels {
  display: flex;
  align-items: center;
  gap: 5px;
  height: 35px;
  padding: 0 7px;
  margin-right: auto;
  border: 1px solid var(--line);
  border-radius: 14px;
  background: var(--panel);
  color: var(--text);
  font-size: 13px;
}

.channels .icon {
  width: 14px;
  height: 14px;
  color: var(--muted);
}

.chat-sort > .icon {
  width: 16px;
  height: 16px;
}

.chat-sort select {
  width: 86px;
  height: 35px;
  margin-left: 4px;
  padding: 0 0 0 8px;
  color: var(--text);
  font-size: 13px;
}

.chat-list {
  list-style: none;
}

.chat-list li {
  display: flex;
  align-items: center;
  height: 93px;
  padding-left: 13px;
  border-bottom: 1px solid var(--line);
}

.chat-list a {
  display: flex;
  flex: 1;
  min-width: 0;
  gap: 13px;
  height: 92px;
  padding: 12px 10px 0 13px;
  border-left: 2px solid transparent;
  color: inherit;
}

.chat-list .unread a {
  border-left-color: #2ba57c;
}

.chat-list .selected a {
  border-left-color: #27272a;
  background: #27272a;
}

.channel {
  position: absolute;
  right: -4px;
  bottom: -4px;
  display: flex;
  align-items: center;
  justify-content: center;
  width: 22px;
  height: 22px;
  border: 2px solid var(--bg);
  border-radius: 50%;
  background: #232327;
  color: var(--muted);
}

.channel .icon {
  width: 12px;
  height: 12px;
}

.wa {
  background: var(--green);
  color: var(--on-green);
}

.chat-body {
  display: flex;
  flex-direction: column;
  flex: 1;
  min-width: 0;
}

.chat-top {
  display: flex;
  justify-content: space-between;
  align-items: center;
}

.chat-top strong {
  font-weight: 500;
}

.new .chat-top strong {
  font-weight: 600;
}

.chat-top time {
  color: var(--muted);
  font-size: 12px;
}

.preview {
  display: flex;
  align-items: center;
  gap: 5px;
  height: 22px;
  padding-right: 6px;
  color: #8b8b93;
  font-size: 13px;
}

.preview span {
  overflow: hidden;
  text-overflow: ellipsis;
  white-space: nowrap;
}

.preview .icon {
  width: 13px;
  height: 13px;
}

.out .icon {
  color: var(--green);
}

.chat-foot {
  display: flex;
  align-items: center;
  margin-top: 2px;
  color: #94949b;
  font-size: 12px;
}

.chat-foot .pill {
  margin-right: auto;
}

.count, .agent {
  display: flex;
  align-items: center;
  justify-content: center;
  width: 18px;
  height: 18px;
  margin-right: 7px;
  border-radius: 50%;
  background: var(--green);
  color: var(--on-green);
  font-weight: 500;
}

.agent {
  width: 22px;
  height: 22px;
  margin-right: 5px;
  color: #fff;
  font-size: 10px;
  font-weight: 600;
}

.blue {
  background: #0891b2;
}

.orange {
  background: #d97706;
}

/* thread header */
.thread {
  display: flex;
  flex-direction: column;
  min-width: 0;
}

.thread-head {
  display: flex;
  flex-direction: column;
  gap: 11px;
  padding: 6px 14px 7px 18px;
  background: var(--panel);
  border-bottom: 1px solid var(--line);
}

.head-row {
  display: flex;
  align-items: center;
  gap: 9px;
  min-height: 36px;
}

.head-row h2 {
  margin-right: 2px;
  font-size: 15px;
  font-weight: 600;
}

.avatar-head {
  width: 40px;
  height: 40px;
}

.small {
  width: 14px;
  height: 14px;
  margin: 0 -5px;
  color: var(--muted);
}

.ad-chip {
  width: 194px;
  padding: 0 9px;
  border-radius: 12px;
  background: #232327;
  color: var(--muted);
  font-size: 12px;
  font-weight: 500;
  line-height: 23px;
}

.ad-chip span {
  display: block;
  overflow: hidden;
  height: 23px;
}

.search-btn {
  width: 40px;
  height: 36px;
}

.search-btn .icon, .call-btn .icon {
  vertical-align: middle;
}

.team {
  width: 137px;
  height: 35px;
  padding: 0 0 0 10px;
  font-size: 13px;
}

.head-controls .call-btn {
  margin-left: auto;
  margin-right: 12px;
}

.call-btn {
  width: 40px;
  height: 36px;
}

.me {
  position: relative;
  width: 31px;
  height: 31px;
  margin-right: 12px;
  border-radius: 50%;
  background: #1b332e;
  color: var(--green-text);
  font-size: 11px;
  line-height: 31px;
  text-align: center;
}

.me::after {
  content: "";
  position: absolute;
  right: -3px;
  bottom: -3px;
  width: 9px;
  height: 9px;
  border-radius: 50%;
  background: var(--green);
}

.state {
  padding: 0 13px;
  border-radius: 12px;
  background: #232327;
  font-size: 13px;
  font-weight: 600;
  line-height: 24px;
}

.agent-chip {
  display: flex;
  align-items: center;
  gap: 5px;
  height: 29px;
  padding: 0 10px;
  border: 1px solid #164a3b;
  border-radius: 15px;
  background: #1d2627;
  color: var(--green-text);
  font-size: 13px;
  font-weight: 500;
}

.agent-chip .icon {
  width: 14px;
  height: 14px;
}

.more .icon {
  fill: currentColor;
}

/* messages */
.messages {
  display: flex;
  flex: 1;
  flex-direction: column;
  align-items: flex-start;
  justify-content: flex-end;
  gap: 13px;
  min-height: 0;
  overflow: hidden;
  padding: 0 13px 13px 14px;
}

.msg {
  display: flex;
  flex-direction: column;
  flex: none;
  align-items: flex-start;
  max-width: 75%;
  padding: 8px 18px 10px;
  border: 1px solid var(--line);
  border-radius: 18px;
  background: var(--panel);
}

.msg-full {
  width: 75%;
}

.msg p {
  white-space: pre-line;
}

.msg time {
  align-self: flex-end;
  color: #94949b;
  font-size: 12px;
  line-height: 20px;
}

.from {
  color: var(--muted);
  font-size: 13px;
  font-weight: 500;
}

.sent {
  align-self: flex-end;
  padding: 9px 17px;
  border: 0;
  background: var(--green);
  color: var(--on-green);
}

.sent time {
  color: var(--on-green);
}

.ai-badge {
  display: flex;
  align-items: center;
  gap: 5px;
  height: 22px;
  margin-bottom: 2px;
  padding: 0 9px;
  border-radius: 11px;
  background: #7c3aed;
  color: #fff;
  font-size: 13px;
  font-weight: 600;
}

.ai-badge .icon {
  width: 15px;
  height: 15px;
}

/* composer */
.composer {
  padding: 9px 13px 9px 14px;
  background: var(--panel);
  border-top: 1px solid var(--line);
}

.via {
  display: flex;
  align-items: center;
  height: 22px;
  color: var(--muted);
  font-size: 12px;
}

.via .icon {
  width: 14px;
  height: 14px;
}

.via span {
  flex: 1;
  margin-left: 6px;
}

.via button {
  height: 22px;
  padding: 0 11px;
  border-radius: 11px;
  font-size: 13px;
  font-weight: 500;
}

.via button + button {
  margin-left: 4px;
}

.via .active {
  background: #1b332e;
  color: var(--green-text);
}

.banner {
  display: flex;
  align-items: center;
  justify-content: space-between;
  height: 55px;
  margin-top: 5px;
  padding: 0 13px;
  border: 1px solid #164a3b;
  border-radius: 18px;
  background: #1d2627;
  font-size: 13px;
}

.reply-row {
  display: flex;
  align-items: flex-end;
}

.tool {
  width: 40px;
  height: 40px;
  margin-right: 9px;
}

.tool .icon {
  vertical-align: middle;
}

.reply-row textarea {
  flex: 1;
  height: 62px;
  margin: 5px 10px 7px -1px;
  padding: 9px 14px;
  border: 1px solid var(--line);
  border-radius: 14px;
  outline: 2px solid var(--green);
  outline-offset: 2px;
  background: var(--panel);
}

.later {
  width: 54px;
  height: 38px;
  margin-bottom: 1px;
  opacity: 0.5;
}

.send {
  height: 41px;
  margin-left: 10px;
  padding: 0 18px;
  font-size: 15px;
  opacity: 0.5;
}

.hints {
  display: flex;
  align-items: center;
  gap: 10px;
  height: 35px;
  margin-top: 9px;
  padding: 0 2px;
  color: var(--muted);
  font-size: 12px;
}

.hints span {
  margin-right: auto;
}

.hints kbd {
  padding: 0 4px;
  border-radius: 4px;
  background: #232327;
  color: var(--text);
}

.hints .btn {
  color: var(--text);
}

.sends {
  display: flex;
  align-items: center;
  gap: 11px;
  height: 35px;
  margin-top: 5px;
}

.sends select {
  flex: 1;
  min-width: 0;
  height: 35px;
  padding: 0 0 0 9px;
  font-size: 13px;
}

.sends .template {
  flex: 0 0 187px;
  padding-right: 8px;
}

.sends .btn {
  height: 33px;
}

.muted {
  background: #18181c;
  border-color: #212125;
  color: var(--muted);
}

/* details */
.details {
  display: flex;
  flex-direction: column;
  min-width: 0;
  overflow: hidden;
  background: var(--panel);
}

.person {
  display: flex;
  gap: 13px;
  padding: 18px 27px 0 16px;
}

.avatar-big {
  width: 49px;
  height: 49px;
  font-size: 15px;
}

.person-text {
  display: flex;
  flex: 1;
  flex-direction: column;
  min-width: 0;
  color: var(--muted);
  font-size: 13px;
}

.person-text h2 {
  color: var(--text);
  font-size: 18px;
  font-weight: 500;
  line-height: 26px;
}

.person-text code {
  font-size: 12px;
  line-height: 18px;
}

.source {
  display: flex;
  align-items: center;
  gap: 5px;
  height: 24px;
}

.source .icon {
  width: 13px;
  height: 13px;
}

.source span {
  max-width: 164px;
  overflow: hidden;
  text-overflow: ellipsis;
  white-space: nowrap;
}

.person .icon-btn {
  height: 36px;
  margin-left: 8px;
}

.tabs {
  display: flex;
  gap: 4px;
  margin: 20px 0 0 16px;
}

.tabs button {
  flex: none;
  height: 44px;
  padding: 0 14px;
  border-radius: 22px;
  color: #94949b;
  font-size: 13px;
  font-weight: 500;
  line-height: 17px;
}

.tabs .active {
  background: #1b332e;
  color: var(--green-text);
}

.details-body {
  flex: 1;
  min-height: 0;
  overflow: hidden;
  padding: 23px 18px 0 16px;
}

.details .call-btn {
  display: block;
}

.field {
  margin-top: 12px;
}

.call-btn + .field {
  margin-top: 23px;
}

.field > label {
  display: block;
  color: #94949b;
  font-size: 13px;
}

.field input {
  width: 100%;
  height: 37px;
  margin-top: 3px;
  padding: 0 12px;
  border: 1px solid var(--line);
  border-radius: 14px;
  background: var(--panel);
}

.phone-row {
  display: flex;
  align-items: end;
  gap: 7px;
}

.phone-row select {
  flex: 0 0 102px;
  height: 37px;
  padding: 0 0 0 7px;
}

.phone-row input {
  min-width: 0;
}

.add-email {
  display: block;
  margin-top: 11px;
  font-size: 13px;
  font-weight: 500;
}

.details section {
  border-bottom: 1px solid var(--line);
}

h3 {
  color: var(--muted);
  font-size: 13px;
  font-weight: 600;
  line-height: 20px;
}

.details .attribution {
  margin-top: 20px;
  padding-top: 16px;
  border-top: 1px solid var(--line);
  border-bottom: 0;
}

.ad {
  display: flex;
  gap: 12px;
  margin-top: 13px;
}

.thumb {
  display: flex;
  align-items: center;
  justify-content: center;
  flex: none;
  width: 48px;
  height: 48px;
  border-radius: 14px;
  background: #242428;
  color: #777780;
}

.ad strong {
  display: block;
  font-weight: 500;
}

.ad p {
  color: #94949b;
  font-size: 13px;
}

.id-row {
  display: flex;
  align-items: center;
  gap: 12px;
  height: 26px;
  color: #94949b;
  font-size: 11px;
}

.ad + .id-row {
  margin-top: 10px;
}

.id-row .icon {
  width: 13px;
  height: 13px;
}

.lifecycle {
  margin-top: 19px;
  padding-bottom: 23px;
}

.lifecycle select {
  width: 100%;
  height: 39px;
  margin-top: 7px;
  padding: 0 0 0 13px;
}

.appointments {
  padding: 16px 0 22px;
}

.appt-head {
  display: flex;
  justify-content: space-between;
  font-size: 13px;
  font-weight: 500;
  line-height: 20px;
}

.appointments p {
  margin-top: 9px;
  color: var(--muted);
}

.tags {
  padding: 12px 16px 15px;
  border-top: 1px solid var(--line);
}

.tag-row {
  display: flex;
  flex-wrap: wrap;
  align-items: center;
  gap: 6px 7px;
  margin-top: 5px;
}

.tags h3 + .tag-row + h3 {
  margin-top: 12px;
}

.tag {
  display: flex;
  align-items: center;
  gap: 7px;
  height: 22px;
  padding: 0 8px;
  border-radius: 11px;
  font-size: 13px;
  font-weight: 500;
}

.rose {
  background: #381722;
  color: #d61f50;
}

.green {
  background: #1a2e26;
  color: #1fa653;
}

.tag button {
  margin-left: 2px;
}

.add-tag {
  display: flex;
  align-items: center;
  justify-content: center;
  width: 31px;
  height: 31px;
  border: 1px solid var(--line);
  border-radius: 50%;
  color: #94949b;
}
```
